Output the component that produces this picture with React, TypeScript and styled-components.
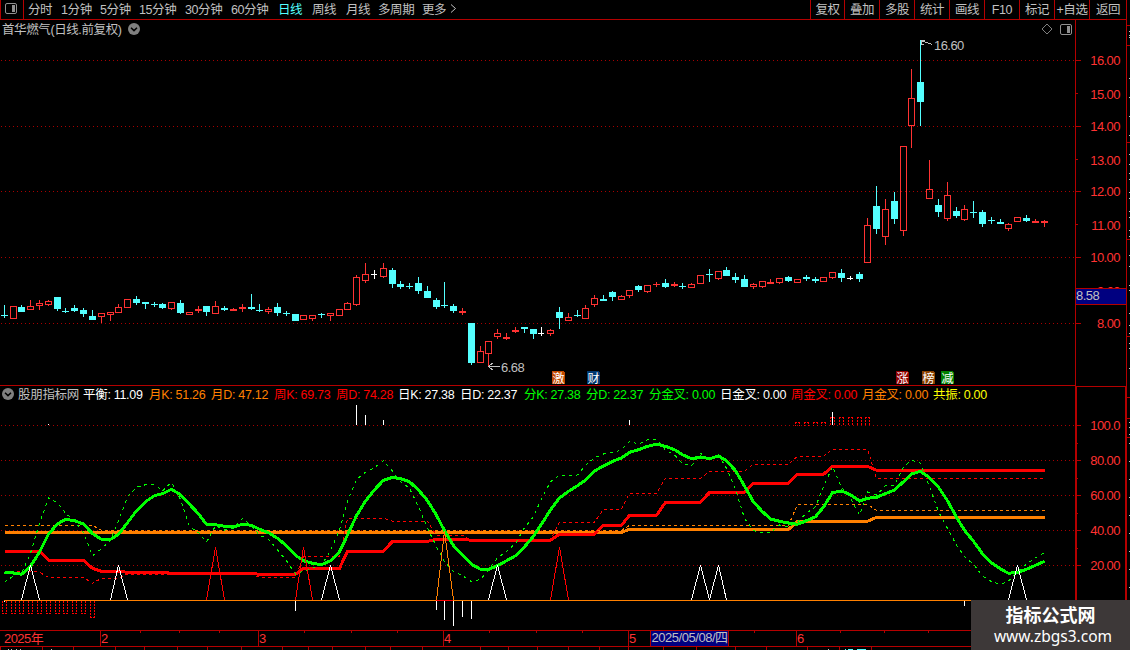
import React from "react";
import styled, { createGlobalStyle, ThemeProvider } from "styled-components";

const theme = {
  line: "#b40000",
  grid: "#a80000",
  text: "#c0c0c0",
  up: "#ff3232",
  down: "#54ffff",
  axis: "#ff3232",
  cursor: "#000080",
};

const GlobalStyle = createGlobalStyle`
  body {
    margin: 0;
    background: #000;
    overflow: hidden;
  }
  * {
    box-sizing: border-box;
  }
  svg {
    display: block;
  }
  svg text {
    font-size: 13px;
    letter-spacing: -0.55px;
  }
`;

const Terminal = styled.div`
  width: 1130px;
  height: 650px;
  display: grid;
  grid-template-columns: 1126px 4px;
  background: #000;
  color: ${({ theme }) => theme.text};
  font-family: "Liberation Sans", "Noto Sans CJK SC", sans-serif;
  font-size: 12.5px;
  letter-spacing: -0.4px;
  white-space: nowrap;
  position: relative;
  overflow: hidden;
`;

const Workspace = styled.div`
  display: grid;
  grid-template-rows: 20px 366px 244px 17px 3px;
  min-width: 0;
`;

const Toolbar = styled.div`
  display: flex;
  height: 20px;
  border-bottom: 1px solid ${({ theme }) => theme.line};
  line-height: 20px;
`;

const PanelToggle = styled.div`
  width: 24px;
  padding: 3px 0 0 4px;
  border: solid ${({ theme }) => theme.line};
  border-width: 0 1px;
`;

const Periods = styled.div`
  display: flex;
  flex: 1;
  padding-left: 4px;
`;

const Period = styled.span<{ $w: number; $active?: boolean }>`
  width: ${({ $w }) => $w}px;
  color: ${({ theme, $active }) => ($active ? theme.down : theme.text)};
`;

const Tool = styled.span<{ $w: number }>`
  width: ${({ $w }) => $w}px;
  border-left: 1px solid ${({ theme }) => theme.line};
  text-align: center;
`;

const Pane = styled.div`
  display: grid;
  grid-template-columns: 1075px 51px;
`;

const Plot = styled.div<{ $ruled?: boolean }>`
  display: flex;
  flex-direction: column;
  border-bottom: ${({ theme, $ruled }) =>
    $ruled ? `1px solid ${theme.line}` : "none"};
`;

const PlotTitle = styled.div`
  display: flex;
  align-items: center;
  height: 18px;
  padding: 0 3px 0 2px;
  gap: 5px;
`;

const StockName = styled.span`
  width: 121px;
  height: 18px;
  line-height: 20px;
`;

const TitleActions = styled.div`
  display: flex;
  align-items: center;
  gap: 7px;
  margin-left: auto;
`;

const Legend = styled.div`
  display: flex;
  height: 16px;
  padding-left: 2px;
  line-height: 18px;
`;

const LegendIcon = styled.div`
  width: 16px;
  padding-top: 2px;
`;

const LegendItem = styled.span<{ $w: number; $color: string }>`
  width: ${({ $w }) => $w}px;
  color: ${({ $color }) => $color};
  letter-spacing: -0.3px;
`;

const Watermark = styled.div`
  position: absolute;
  right: 0;
  bottom: 0;
  width: 159px;
  height: 50px;
  background: #3d3838;
  color: #fff;
  letter-spacing: 0;
  text-align: center;
`;

const SiteName = styled.div`
  padding-top: 2px;
  font: bold 18px/24px "Noto Sans CJK SC", sans-serif;
`;

const SiteUrl = styled.div`
  padding: 1px 0 0 5px;
  font: 15.5px/18px "Noto Sans", sans-serif;
`;

const periods: [string, number][] = [
  ["分时", 33],
  ["1分钟", 39],
  ["5分钟", 39],
  ["15分钟", 46],
  ["30分钟", 46],
  ["60分钟", 47],
  ["日线", 34],
  ["周线", 34],
  ["月线", 32],
  ["多周期", 44],
  ["更多", 27],
];

const tools: [string, number][] = [
  ["复权", 34],
  ["叠加", 35],
  ["多股", 35],
  ["统计", 35],
  ["画线", 35],
  ["F10", 35],
  ["标记", 35],
  ["+自选", 35],
  ["返回", 37],
];

const legend: [string, string, number][] = [
  ["股朋指标网", "#c0c0c0", 65],
  ["平衡: 11.09", "#ffffff", 66],
  ["月K: 51.26", "#ff8000", 62],
  ["月D: 47.12", "#ff8000", 63],
  ["周K: 69.73", "#ff0000", 62],
  ["周D: 74.28", "#ff0000", 62],
  ["日K: 27.38", "#ffffff", 62],
  ["日D: 22.37", "#ffffff", 64],
  ["分K: 27.38", "#00ff00", 62],
  ["分D: 22.37", "#00ff00", 63],
  ["分金叉: 0.00", "#00ff00", 71],
  ["日金叉: 0.00", "#ffffff", 71],
  ["周金叉: 0.00", "#ff0000", 71],
  ["月金叉: 0.00", "#ff8000", 71],
  ["共振: 0.00", "#ffff00", 60],
];

// high, body top, body bottom, low, kind (r = up, c = down, w = flat)
type Candle = [number, number, number, number, string];
const candles: Candle[] = [
  [305, 315, 316, 318, "c"], [306, 306, 319, 319, "r"], [305, 307, 312, 312, "c"],
  [300, 306, 310, 310, "r"], [300, 303, 306, 310, "r"], [300, 301, 305, 306, "r"],
  [297, 297, 309, 311, "c"], [308, 311, 312, 313, "c"], [305, 308, 311, 312, "c"],
  [308, 310, 314, 317, "c"], [310, 316, 320, 320, "c"], [313, 313, 317, 323, "r"],
  [312, 312, 315, 321, "r"], [304, 307, 313, 313, "r"], [299, 299, 308, 308, "r"],
  [296, 299, 303, 305, "c"], [302, 302, 304, 309, "c"], [302, 304, 305, 307, "c"],
  [303, 304, 308, 309, "c"], [302, 302, 309, 310, "r"], [300, 303, 313, 314, "c"],
  [312, 312, 315, 315, "r"], [306, 309, 311, 313, "r"], [306, 306, 312, 316, "c"],
  [301, 306, 314, 314, "r"], [306, 308, 310, 311, "c"], [308, 309, 311, 311, "r"],
  [304, 307, 309, 312, "r"], [294, 307, 309, 310, "c"], [304, 310, 311, 312, "c"],
  [307, 309, 312, 314, "r"], [303, 307, 313, 316, "c"], [311, 313, 314, 316, "c"],
  [314, 314, 321, 321, "c"], [315, 315, 320, 320, "r"], [315, 315, 319, 321, "r"],
  [313, 314, 315, 318, "c"], [313, 313, 316, 321, "r"], [309, 309, 316, 316, "r"],
  [302, 303, 310, 310, "r"], [275, 277, 305, 306, "r"], [263, 274, 281, 283, "r"],
  [270, 274, 275, 279, "w"], [263, 268, 277, 278, "r"], [268, 270, 284, 288, "c"],
  [281, 284, 287, 289, "c"], [283, 286, 287, 289, "c"], [277, 283, 291, 294, "c"],
  [286, 291, 298, 298, "c"], [298, 300, 307, 309, "c"], [282, 305, 306, 308, "c"],
  [304, 306, 311, 313, "c"], [308, 311, 313, 315, "r"], [323, 323, 363, 365, "c"],
  [346, 351, 363, 363, "r"], [341, 341, 354, 366, "r"], [329, 333, 337, 339, "r"],
  [333, 337, 339, 340, "r"], [327, 330, 332, 333, "r"], [327, 327, 329, 333, "c"],
  [329, 329, 334, 339, "c"], [327, 333, 334, 336, "w"], [329, 330, 334, 336, "r"],
  [307, 312, 318, 329, "c"], [313, 317, 321, 321, "r"], [310, 315, 316, 317, "c"],
  [305, 308, 319, 319, "r"], [295, 298, 305, 307, "r"], [295, 299, 301, 301, "c"],
  [291, 292, 297, 301, "c"], [295, 296, 300, 300, "r"], [290, 290, 296, 298, "r"],
  [285, 286, 290, 292, "c"], [285, 285, 292, 293, "r"], [282, 284, 285, 287, "r"],
  [279, 283, 287, 288, "c"], [282, 284, 286, 287, "r"], [283, 286, 287, 289, "c"],
  [283, 284, 288, 288, "r"], [275, 275, 284, 284, "r"], [269, 274, 275, 282, "c"],
  [271, 271, 279, 280, "r"], [267, 270, 276, 276, "c"], [273, 277, 280, 283, "c"],
  [275, 279, 287, 287, "c"], [283, 284, 287, 289, "r"], [281, 281, 287, 288, "r"],
  [279, 282, 284, 284, "r"], [278, 278, 283, 284, "r"], [276, 277, 281, 282, "c"],
  [279, 279, 283, 283, "r"], [275, 277, 279, 281, "c"], [277, 279, 281, 283, "c"],
  [277, 277, 282, 282, "r"], [272, 272, 278, 279, "r"], [269, 273, 278, 282, "c"],
  [276, 278, 279, 280, "w"], [272, 274, 279, 282, "c"], [218, 225, 263, 263, "r"],
  [186, 206, 229, 234, "c"], [199, 209, 237, 245, "r"], [192, 201, 219, 224, "c"],
  [146, 146, 231, 236, "r"], [69, 98, 126, 148, "r"], [40, 82, 102, 126, "c"],
  [160, 189, 199, 199, "r"], [199, 205, 212, 217, "c"], [182, 195, 219, 221, "r"],
  [207, 211, 216, 218, "c"], [205, 209, 220, 221, "r"], [201, 212, 213, 218, "c"],
  [210, 212, 224, 227, "c"], [217, 220, 221, 224, "c"], [219, 222, 224, 224, "c"],
  [223, 224, 229, 231, "r"], [217, 217, 222, 222, "r"], [215, 218, 221, 222, "c"],
  [219, 221, 223, 223, "r"], [220, 221, 223, 227, "r"],
];

// Oscillator series are stored as depth below the plot top, three units per pixel
const dayD = [
  517, 519, 523, 499, 456, 402, 372, 358, 362, 372, 401, 418, 418, 403, 368, 332, 305,
  287, 281, 268, 284, 313, 341, 373, 374, 379, 381, 373, 376, 388, 398, 415, 437, 466,
  482, 490, 494, 482, 455, 405, 347, 303, 269, 241, 232, 236, 245, 270, 302, 346, 392,
  437, 466, 493, 508, 508, 497, 482, 467, 440, 409, 372, 330, 294, 274, 257, 240, 213,
  198, 184, 174, 157, 149, 139, 133, 139, 149, 164, 176, 171, 176, 168, 182, 212, 258,
  306, 335, 357, 364, 369, 373, 362, 350, 321, 278, 273, 284, 303, 295, 292, 281, 270,
  245, 222, 214, 233, 262, 302, 352, 391, 424, 461, 488, 507, 520, 517, 508, 496, 484,
];
const dayK = [
  547, 527, 520, 460, 370, 294, 308, 340, 362, 398, 467, 446, 420, 362, 290, 262, 254,
  253, 273, 247, 298, 380, 398, 427, 377, 390, 384, 355, 378, 405, 418, 450, 482, 522,
  514, 503, 496, 452, 390, 303, 238, 217, 203, 182, 213, 245, 265, 320, 385, 440, 485,
  515, 527, 545, 538, 510, 473, 455, 430, 383, 350, 296, 245, 225, 228, 225, 196, 173,
  162, 158, 149, 124, 133, 119, 118, 150, 165, 190, 198, 160, 178, 166, 205, 268, 355,
  392, 399, 398, 375, 380, 366, 340, 320, 260, 200, 262, 295, 345, 276, 285, 257, 256,
  200, 181, 190, 260, 335, 385, 435, 470, 493, 528, 545, 553, 543, 515, 492, 473, 458,
];

// [first bar, last bar, depth]
type Step = [number, number, number];
const weekD: Step[] = [
  [0, 4, 454], [5, 9, 481], [10, 10, 505], [11, 13, 514], [14, 18, 517], [19, 28, 520],
  [29, 33, 523], [34, 38, 505], [39, 43, 454], [44, 48, 424], [49, 52, 418],
  [53, 62, 421], [63, 67, 403], [68, 70, 376], [71, 74, 346], [75, 79, 307],
  [80, 84, 277], [85, 89, 250], [90, 93, 223], [94, 98, 199], [99, 118, 211],
];
const weekK: Step[] = [
  [0, 3, 514], [4, 4, 517], [5, 9, 532], [10, 10, 550], [11, 13, 535], [14, 28, 522],
  [29, 33, 532], [34, 38, 469], [39, 43, 355], [44, 48, 364], [49, 52, 406],
  [53, 62, 421], [63, 67, 367], [68, 70, 328], [71, 74, 280], [75, 79, 235],
  [80, 84, 214], [85, 89, 193], [90, 93, 169], [94, 98, 148], [99, 118, 235],
];
const monthD: Step[] = [[0, 70, 397], [71, 89, 388], [90, 98, 364], [99, 118, 352]];
const monthK: Step[] = [
  [0, 10, 376], [11, 70, 391], [71, 89, 376], [90, 98, 313], [99, 118, 331],
];

const peaks: [number, number, string][] = [
  [3, 565, "#fff"], [13, 565, "#fff"], [37, 565, "#fff"], [56, 565, "#fff"],
  [79, 565, "#fff"], [81, 565, "#fff"], [115, 565, "#fff"],
  [24, 547, "#f00"], [34, 547, "#f00"], [63, 547, "#f00"], [50, 531, "#ff8000"],
];

// x, top, bottom
const sticks: [number, number, number][] = [
  [48, 424, 425], [356, 405, 425], [365, 415, 425], [383, 420, 425], [629, 420, 425],
  [832, 412, 425], [4, 601, 602], [295, 601, 611], [436, 601, 610], [444, 601, 620],
  [453, 601, 626], [462, 601, 617], [471, 601, 619], [964, 601, 606],
];

const barX = (i: number) => Math.floor(4.31 + 8.812 * i);
const depthY = (d: number) => (400 + d / 3).toFixed(1);
const curve = (values: number[]) =>
  values.map((v, i) => `${barX(i) + 0.5},${depthY(v)}`).join(" ");
const steps = (list: Step[]) =>
  list
    .map(([a, b, v]) => `${barX(a) + 0.5},${depthY(v)} ${barX(b) + 0.5},${depthY(v)}`)
    .join(" ");

const ChevronBadge = () => (
  <svg width="12" height="12" viewBox="0 0 12 12">
    <circle cx="6" cy="6" r="6" fill="#808080" />
    <path d="M3 4.8 6 7.6 9 4.8" fill="none" stroke="#000" strokeWidth="1.5" />
  </svg>
);

const PanelIcon = () => (
  <svg width="12" height="11" viewBox="0 0 12 11">
    <rect x=".5" y=".5" width="11" height="10" rx="1.5" fill="none" stroke="#909090" />
    <rect x="7" y="2" width="3" height="7" fill="#909090" />
  </svg>
);

const GridLines = ({ rows }: { rows: number[] }) => (
  <g stroke={theme.grid} strokeDasharray="1 3">
    {rows.map((y) => (
      <line key={y} x1="1" x2="1075" y1={y + 0.5} y2={y + 0.5} />
    ))}
  </g>
);

const CandleShape = ({ index, data }: { index: number; data: Candle }) => {
  const [high, top, bottom, low, kind] = data;
  const x = barX(index);
  const color = kind === "w" ? "#fff" : kind === "r" ? theme.up : theme.down;
  const hollow = kind === "r" && bottom - top > 2;
  return (
    <g fill={color}>
      {high < top && <rect x={x} y={high} width="1" height={top - high} />}
      {low > bottom && <rect x={x} y={bottom} width="1" height={low - bottom} />}
      {hollow ? (
        <rect
          x={x - 2.5}
          y={top + 0.5}
          width="6"
          height={bottom - top - 1}
          fill="none"
          stroke={color}
        />
      ) : (
        <rect x={x - 3} y={top} width={kind === "w" ? 6 : 7} height={bottom - top} />
      )}
    </g>
  );
};

const markers: [string, number, string][] = [
  ["激", 552, "#c04800"],
  ["财", 587, "#003870"],
  ["涨", 896, "#900000"],
  ["榜", 922, "#884000"],
  ["减", 941, "#008000"],
];

const PriceChart = () => (
  <svg width="1075" height="347" viewBox="0 38 1075 347" shapeRendering="crispEdges">
    <GridLines rows={[60, 126, 191, 257, 323]} />
    {candles.map((c, i) => (
      <CandleShape key={i} index={i} data={c} />
    ))}
    <g fill="none" stroke={theme.text}>
      <path d="M921 41.5h3l8 3M921 40.5h4M921.5 41v3l2 1" />
      <path d="M488 366.5h12M492.5 363l-4 3.5 4 3.5" />
    </g>
    <g fill={theme.text}>
      <text x="934" y="50">16.60</text>
      <text x="501" y="372">6.68</text>
    </g>
    {markers.map(([label, x, color]) => (
      <g key={label}>
        <path d={`M${x} 371h11l2 2v11h-13z`} fill={color} />
        <text x={x + 0.5} y="382.5" fill="#fff" style={{ fontSize: 12 }}>
          {label}
        </text>
      </g>
    ))}
  </svg>
);

const Histogram = () => (
  <g fill="none" stroke="#f00" strokeDasharray="2 1">
    {[...Array(11)].map((_, i) => {
      const bottom = i === 10 ? 618 : 614;
      const x = barX(i);
      return (
        <path
          key={i}
          d={`M${x - 1.5} 601V${bottom}M${x + 2.5} 601V${bottom}M${x - 2} ${bottom - 0.5}h5`}
        />
      );
    })}
    {[90, 91, 92, 93, 94, 95, 96, 97, 98].map((i) => {
      const top = i < 94 ? 422 : 417;
      const x = barX(i);
      return (
        <path
          key={i}
          d={`M${x - 1.5} ${top}V426M${x + 2.5} ${top}V426M${x - 2} ${top + 0.5}h5`}
        />
      );
    })}
  </g>
);

const Oscillator = () => (
  <svg width="1075" height="228" viewBox="0 402 1075 228" shapeRendering="crispEdges">
    <GridLines rows={[425, 460, 495, 530, 565]} />
    <g fill="none" strokeWidth="3">
      <polyline points={steps(monthD)} stroke="#ff8000" />
      <polyline points={steps(weekD)} stroke="#f00" />
    </g>
    <g fill="none" strokeDasharray="3 3">
      <polyline points={steps(monthK)} stroke="#ff8000" />
      <polyline points={steps(weekK)} stroke="#f00" />
      <polyline points={curve(dayK)} stroke="#0f0" strokeDasharray="3 4" />
    </g>
    <line x1="4" x2="1045" y1="600.5" y2="600.5" stroke="#ff8000" />
    <line x1="436" x2="453" y1="600.5" y2="600.5" stroke="#f00" />
    <Histogram />
    {sticks.map(([x, top, bottom]) => (
      <rect key={`${x}-${top}`} x={x} y={top} width="1" height={bottom - top} fill="#fff" />
    ))}
    <polyline points={curve(dayD)} fill="none" stroke="#0f0" strokeWidth="3" />
    {peaks.map(([i, top, color]) => (
      <polyline
        key={i}
        points={`${barX(i - 1) + 0.5},600 ${barX(i) + 0.5},${top} ${barX(i + 1) + 0.5},600`}
        fill="none"
        stroke={color}
      />
    ))}
  </svg>
);

const AxisLabels = ({ items }: { items: [string, number][] }) => (
  <g fill={theme.axis} textAnchor="end">
    {items.map(([label, y]) => (
      <text key={label} x="45" y={y}>
        {label}
      </text>
    ))}
  </g>
);

const PriceAxis = () => (
  <svg width="51" height="366" viewBox="0 20 51 366" shapeRendering="crispEdges">
    <g fill={theme.line}>
      <rect width="1" y="20" height="366" />
      {[60, 126, 191, 257, 323].map((y) => (
        <rect key={y} x="1" y={y} width="5" height="1" />
      ))}
      {[93, 159, 224].map((y) => (
        <rect key={y} x="1" y={y} width="2" height="1" />
      ))}
    </g>
    <AxisLabels
      items={[
        ["16.00", 65],
        ["15.00", 99],
        ["14.00", 131],
        ["13.00", 165],
        ["12.00", 196],
        ["11.00", 230],
        ["10.00", 262],
        ["9.00", 296],
        ["8.00", 328],
      ]}
    />
    <rect x="1" y="288" width="50" height="17" fill={theme.cursor} />
    <path d="M0 288.5h51M0 304.5h51" stroke={theme.line} />
    <text x="1" y="300" fill={theme.text}>
      8.58
    </text>
  </svg>
);

const OscillatorAxis = () => (
  <svg width="51" height="244" viewBox="0 386 51 244" shapeRendering="crispEdges">
    <g fill={theme.line}>
      <rect width="2" y="386" height="244" />
      <rect x="50" width="1" y="386" height="244" />
      <rect width="51" y="386" height="1" />
      {[425, 460, 495, 530, 565].map((y) => (
        <rect key={y} x="2" y={y} width="4" height="1" />
      ))}
      {[443, 478, 513, 548].map((y) => (
        <rect key={y} x="2" y={y} width="1" height="1" />
      ))}
    </g>
    <AxisLabels
      items={[
        ["100.0", 430],
        ["80.00", 465],
        ["60.00", 500],
        ["40.00", 535],
        ["20.00", 570],
      ]}
    />
  </svg>
);

const months: [string, number][] = [
  ["2", 100],
  ["3", 258],
  ["4", 443],
  ["5", 628],
  ["6", 796],
];

const TimeAxis = () => (
  <svg width="1126" height="17" viewBox="0 630 1126 17" shapeRendering="crispEdges">
    <g fill={theme.line}>
      <rect y="630" width="1126" height="1" />
      <rect y="646" width="1126" height="1" />
      {[140, 179, 219, 304, 351, 397, 489, 536, 582, 754, 840, 884, 928].map((x) => (
        <rect key={x} x={x} y="631" width="1" height="2" />
      ))}
      {months.map(([, x]) => (
        <rect key={x} x={x} y="631" width="1" height="15" />
      ))}
    </g>
    <g fill={theme.axis}>
      <text x="4" y="643">2025年</text>
      {months.map(([label, x]) => (
        <text key={label} x={x + 1} y="643">
          {label}
        </text>
      ))}
    </g>
    <rect x="650" y="631" width="79" height="15" fill={theme.cursor} />
    <path d="M650.5 631v15M728.5 631v15" stroke={theme.line} />
    <text x="651.5" y="642" fill={theme.text} textLength="76">
      2025/05/08/四
    </text>
  </svg>
);

const BottomEdge = () => (
  <svg width="1126" height="3" viewBox="0 647 1126 3" shapeRendering="crispEdges">
    <g fill={theme.line}>
      {[
        0, 42, 73, 115, 144, 177, 207, 241, 282, 308, 332, 365, 390, 422, 480, 508, 537,
        568, 599, 628, 663, 696, 735, 766, 807, 839, 871,
      ].map((x) => (
        <rect key={x} x={x} y="647" width="1" height="3" />
      ))}
    </g>
    <g fill={theme.text}>
      {[8, 11, 16, 20, 51, 828].map((x) => (
        <rect key={x} x={x} y="649" width="1" height="1" />
      ))}
    </g>
    <path d="M845 649.5h1M848 649.5h5M857 649.5h9" stroke={theme.down} />
  </svg>
);

const SideRail = () => (
  <svg width="4" height="650" viewBox="0 0 4 650" shapeRendering="crispEdges">
    <rect width="1" height="650" fill={theme.line} />
    {[25, 45, 142, 239, 336, 397, 418, 437].map((y) => (
      <rect key={y} x="1" y={y} width="3" height="1" fill={theme.line} />
    ))}
    {[
      31, 35, 37, 78, 97, 116, 135, 154, 164, 173, 179, 192, 198, 211, 217, 230, 236, 255,
      266, 285, 290, 313, 325, 333, 343, 348, 368, 422, 427, 434, 443, 461, 479, 497, 515,
      533, 551, 569, 587,
    ].map((y) => (
      <rect key={y} x="3" y={y} width="1" height="1" fill={theme.text} />
    ))}
  </svg>
);

const App = () => (
  <ThemeProvider theme={theme}>
    <GlobalStyle />
    <Terminal>
      <Workspace>
        <Toolbar>
          <PanelToggle>
            <PanelIcon />
          </PanelToggle>
          <Periods>
            {periods.map(([label, w]) => (
              <Period key={label} $w={w} $active={label === "日线"}>
                {label}
              </Period>
            ))}
            <svg width="8" height="18" viewBox="0 0 8 18">
              <path d="M2 4.5 6.5 8.5 2 12.5" fill="none" stroke="#c0c0c0" />
            </svg>
          </Periods>
          {tools.map(([label, w]) => (
            <Tool key={label} $w={w}>
              {label}
            </Tool>
          ))}
        </Toolbar>
        <Pane>
          <Plot $ruled>
            <PlotTitle>
              <StockName>首华燃气(日线.前复权)</StockName>
              <ChevronBadge />
              <TitleActions>
                <svg width="12" height="12" viewBox="0 0 12 12">
                  <path d="M6 1 11 6 6 11 1 6z" fill="none" stroke="#808080" />
                </svg>
                <PanelIcon />
              </TitleActions>
            </PlotTitle>
            <PriceChart />
          </Plot>
          <PriceAxis />
        </Pane>
        <Pane>
          <Plot>
            <Legend>
              <LegendIcon>
                <ChevronBadge />
              </LegendIcon>
              {legend.map(([label, color, w]) => (
                <LegendItem key={label} $w={w} $color={color}>
                  {label}
                </LegendItem>
              ))}
            </Legend>
            <Oscillator />
          </Plot>
          <OscillatorAxis />
        </Pane>
        <TimeAxis />
        <BottomEdge />
      </Workspace>
      <SideRail />
      <Watermark>
        <SiteName>指标公式网</SiteName>
        <SiteUrl>www.zbgs3.com</SiteUrl>
      </Watermark>
    </Terminal>
  </ThemeProvider>
);

export default App;
